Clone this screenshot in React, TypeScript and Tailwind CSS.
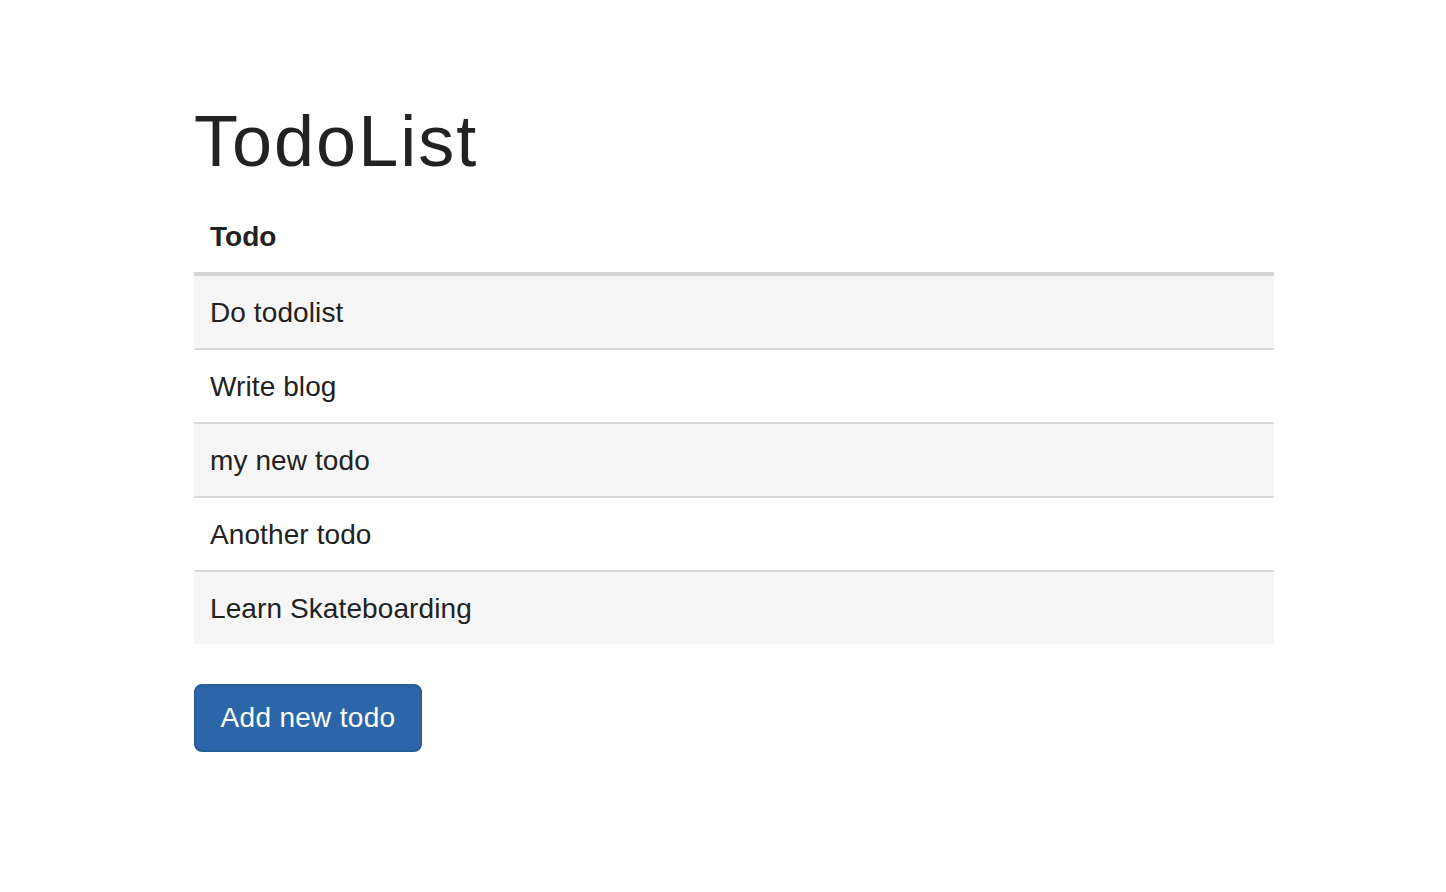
import React from "react";

const todos = ["Do todolist", "Write blog", "my new todo", "Another todo", "Learn Skateboarding"];

export default function App() {
  return (
    <div
      className="min-h-[892px] bg-white text-[#222222]"
      style={{ fontFamily: '"Liberation Sans", Arial, Helvetica, sans-serif' }}
    >
      <div className="ml-[194px] w-[1080px] pt-[102px]">
        <h1 className="m-0 mb-[20px] text-[72px] font-normal leading-[78px] tracking-[2px]">TodoList</h1>
        <table className="w-full border-collapse text-[28px] leading-[40px] tracking-[0.1px]">
          <thead>
            <tr>
              <th className="border-b-[4px] border-[#d5d5d5] px-[16px] pt-[17px] pb-[15px] text-left font-bold tracking-[0px]">
                Todo
              </th>
            </tr>
          </thead>
          <tbody>
            {todos.map((t, i) => (
              <tr key={t} className={i % 2 === 0 ? "bg-[#f6f6f6]" : "bg-white"}>
                <td
                  className={
                    "px-[16px] pt-[17px] pb-[15px] " +
                    (i < todos.length - 1 ? "border-b-[2px] border-[#dadada]" : "")
                  }
                >
                  {t}
                </td>
              </tr>
            ))}
          </tbody>
        </table>
        <button
          type="button"
          className="mt-[40px] h-[68px] w-[228px] rounded-[8px] border-[2px] border-[#285d9b] bg-[#2c65a8] text-[28px] leading-[40px] tracking-[0.3px] text-white"
        >
          Add new todo
        </button>
      </div>
    </div>
  );
}
